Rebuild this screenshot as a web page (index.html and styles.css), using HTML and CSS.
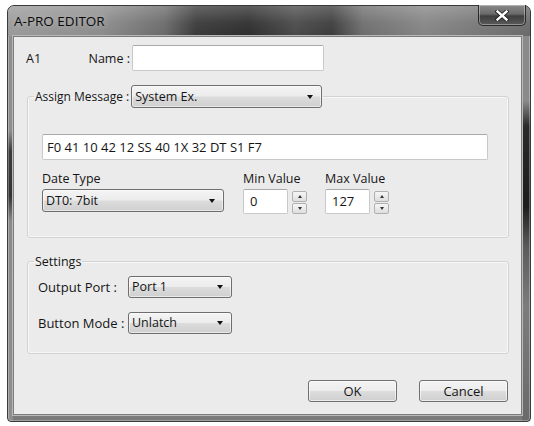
FILE: index.html
```html
<!DOCTYPE html>
<html>
<head>
<meta charset="utf-8">
<title>A-PRO EDITOR</title>
<link rel="stylesheet" href="styles.css">
</head>
<body>
<div class="window">
  <div class="titlebar">
    <span class="title">A-PRO EDITOR</span>
    <div class="close">
      <svg width="14" height="11" viewBox="0 0 14 11"><path d="M2.5 1.5 L11.5 9.5 M11.5 1.5 L2.5 9.5" stroke="#1a1a1a" stroke-width="4" stroke-linecap="square"/><path d="M2.5 1.5 L11.5 9.5 M11.5 1.5 L2.5 9.5" stroke="#fff" stroke-width="2.4" stroke-linecap="square"/></svg>
    </div>
  </div>
  <div class="client">
    <div class="row-name">
      <span class="id">A1</span>
      <span class="name-lbl">Name :</span>
      <div class="field name-field"></div>
    </div>

    <fieldset class="group assign">
      <legend class="legend-row"><span class="legend-text">Assign Message :</span><div class="combo combo-assign"><span class="combo-val">System Ex.</span><span class="arrow"></span></div></legend>
      <div class="assign-body">
        <div class="field hex-field">F0 41 10 42 12 SS 40 1X 32 DT S1 F7</div>
        <div class="param-row">
          <div class="param param-type">
            <div class="plabel">Date Type</div>
            <div class="combo combo-type"><span class="combo-val">DT0: 7bit</span><span class="arrow"></span></div>
          </div>
          <div class="param param-min">
            <div class="plabel">Min Value</div>
            <div class="spin">
              <div class="field num-field">0</div>
              <div class="spin-btns"><div class="sbtn"><span class="up"></span></div><div class="sbtn"><span class="down"></span></div></div>
            </div>
          </div>
          <div class="param param-max">
            <div class="plabel">Max Value</div>
            <div class="spin">
              <div class="field num-field">127</div>
              <div class="spin-btns"><div class="sbtn"><span class="up"></span></div><div class="sbtn"><span class="down"></span></div></div>
            </div>
          </div>
        </div>
      </div>
    </fieldset>

    <fieldset class="group settings">
      <legend class="legend-plain">Settings</legend>
      <div class="settings-body">
        <div class="set-row">
          <span class="set-lbl">Output Port :</span>
          <div class="combo combo-small"><span class="combo-val">Port 1</span><span class="arrow"></span></div>
        </div>
        <div class="set-row">
          <span class="set-lbl">Button Mode :</span>
          <div class="combo combo-small"><span class="combo-val">Unlatch</span><span class="arrow"></span></div>
        </div>
      </div>
    </fieldset>

    <div class="buttons">
      <div class="btn">OK</div>
      <div class="btn">Cancel</div>
    </div>
  </div>
</div>
</body>
</html>
```

FILE: styles.css
```css
* { box-sizing: border-box; }
html, body { margin: 0; background: #fff; }
body {
  padding: 5px 3px 4px 7px;
  font-family: "Open Sans", "DejaVu Sans", sans-serif;
  font-size: 12.5px;
  color: #151515;
}

.window {
  width: 524px;
  height: 417px;
  border: 1px solid #3a3a3a;
  border-radius: 7px 7px 4px 4px;
  padding: 0 8px 6px 5px;
  display: flex;
  flex-direction: column;
  background:
    linear-gradient(180deg, #8a8a8a 0, #8a8a8a 95px, #2a2a2a 120px, #1c1c1c 200px, #5a5a5a 240px, #7c7c7c 300px, #6a6a6a 100%) right top / 8px 100% no-repeat,
    linear-gradient(180deg, #8e8e8e 0, #8e8e8e 125px, #3c3c3c 145px, #333 190px, #8a8a8a 215px, #8e8e8e 100%) left top / 5px 100% no-repeat,
    linear-gradient(180deg, #8a8a8a, #7a7a7a);
  box-shadow: inset 0 0 0 1px rgba(255,255,255,0.3);
}

.titlebar {
  height: 30px;
  display: flex;
  align-items: flex-start;
  justify-content: space-between;
  margin: 0 -8px 0 -5px;
  padding: 0 6px 0 6px;
  border-radius: 6px 6px 0 0;
  background:
    linear-gradient(180deg, rgba(255,255,255,0.22) 0, rgba(255,255,255,0.05) 55%, rgba(0,0,0,0) 100%),
    linear-gradient(90deg, #9a9a9a 0, #8c8c8c 18%, #6a6a6a 30%, #3a3a3a 36%, #2e2e2e 46%, #4a4a4a 55%, #3c3c3c 62%, #6e6e6e 68%, #858585 80%, #7a7a7a 88%, #6a6a6a 100%);
}

.title {
  font-size: 13.5px;
  line-height: 30px;
  color: #0a0a0a;
  padding-left: 0;
  text-shadow: 0 0 6px rgba(255,255,255,0.45);
}

.close {
  width: 48px;
  height: 21px;
  margin-top: -1px;
  margin-right: -2px;
  border: 1px solid #2a2a2a;
  border-top: none;
  border-radius: 0 0 5px 5px;
  display: flex;
  align-items: center;
  justify-content: center;
  background: linear-gradient(180deg, #8a8a8a 0, #6a6a6a 45%, #3e3e3e 55%, #5a5a5a 100%);
  box-shadow: inset 0 0 0 1px rgba(255,255,255,0.35);
}

.client {
  flex: 1;
  background: #ebebeb;
  border: 1px solid #7c7c7c;
  box-shadow: 0 0 0 1px #b8b8b8;
  padding: 8px 12px 11px 12px;
  display: flex;
  flex-direction: column;
}

.field {
  background: #fff;
  border: 1px solid #c9c9c9;
  border-top-color: #a9a9a9;
  border-radius: 2px;
}

.row-name {
  display: flex;
  align-items: center;
  height: 26px;
}
.id { width: 62px; }
.name-lbl { width: 44px; text-align: right; padding-right: 2px; }
.name-field { width: 192px; height: 26px; }

.group {
  margin: 0 0 0 1px;
  width: 482px;
  border: 1px solid #d2d2d2;
  border-radius: 3px;
  box-shadow: inset 0 0 0 1px #f7f7f7;
  padding: 0 6px;
  min-width: 0;
}
.assign { margin-top: 14px; padding-bottom: 23px; }
.settings { margin-top: 15px; padding-bottom: 19px; }

.legend-row {
  padding: 0 1px;
  display: flex;
  align-items: center;
}
.legend-text { font-size: 12px; margin-right: 2px; }
.legend-plain { padding: 0 1px; line-height: 17px; }

.combo {
  height: 23px;
  border: 1px solid #6e6e6e;
  border-radius: 3px;
  display: flex;
  align-items: center;
  justify-content: space-between;
  padding: 0 8px 0 3px;
  background: linear-gradient(180deg, #f4f4f4 0, #ececec 48%, #dcdcdc 52%, #cfcfcf 100%);
  box-shadow: inset 0 0 0 1px rgba(255,255,255,0.55);
}
.combo-val { line-height: 18px; }
.arrow {
  width: 0; height: 0;
  border-left: 3.5px solid transparent;
  border-right: 3.5px solid transparent;
  border-top: 4px solid #111;
}
.combo-assign { width: 191px; }

.assign-body { padding: 26px 0 0 8px; }
.hex-field {
  width: 446px;
  height: 26px;
  font-size: 13px;
  line-height: 24px;
  padding-left: 4px;
}

.param-row {
  display: flex;
  margin-top: 11px;
  gap: 19px;
}
.plabel { line-height: 16px; height: 16px; margin-bottom: 2px; font-size: 12.5px; }
.param-type .combo { width: 182px; }
.param-max { margin-left: -1px; }

.spin { display: flex; align-items: flex-start; gap: 4px; }
.num-field { width: 45px; height: 25px; padding-left: 6px; line-height: 23px; font-size: 13px; }
.spin-btns { display: flex; flex-direction: column; gap: 1px; margin-top: 2px; }
.sbtn {
  width: 15px;
  height: 11px;
  border: 1px solid #b0b0b0;
  border-radius: 2px;
  background: linear-gradient(180deg, #f6f6f6, #dedede);
  display: flex;
  align-items: center;
  justify-content: center;
}
.up {
  width: 0; height: 0;
  border-left: 2.5px solid transparent;
  border-right: 2.5px solid transparent;
  border-bottom: 3px solid #333;
}
.down {
  width: 0; height: 0;
  border-left: 2.5px solid transparent;
  border-right: 2.5px solid transparent;
  border-top: 3px solid #333;
}

.settings-body {
  padding: 6px 0 0 4px;
  display: flex;
  flex-direction: column;
  gap: 14px;
}
.set-row { display: flex; align-items: center; height: 22px; }
.set-lbl { width: 90px; font-size: 13px; }
.combo-small { width: 104px; height: 22px; }

.buttons {
  display: flex;
  justify-content: flex-end;
  gap: 22px;
  margin-top: 26px;
  margin-right: 1px;
}
.btn {
  width: 89px;
  height: 22px;
  border: 1px solid #707070;
  border-radius: 3px;
  display: flex;
  align-items: center;
  justify-content: center;
  font-size: 13px;
  background: linear-gradient(180deg, #f4f4f4 0, #ececec 48%, #dddddd 52%, #cfcfcf 100%);
  box-shadow: inset 0 0 0 1px rgba(255,255,255,0.6);
}
```
